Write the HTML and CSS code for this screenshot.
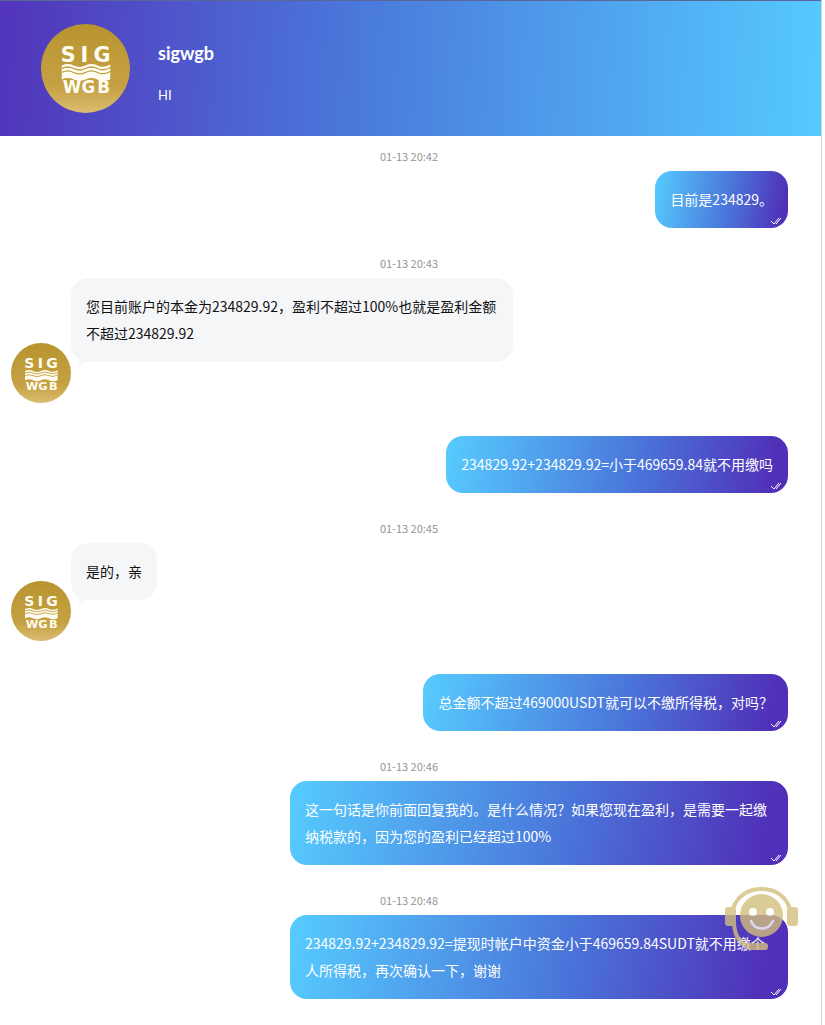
FILE: index.html
```html
<!DOCTYPE html>
<html lang="zh-CN">
<head>
    <meta charset="UTF-8">
    <meta name="viewport" content="width=device-width, initial-scale=1.0">
    <title>sigwgb</title>
    <link rel="stylesheet" href="styles.css">
</head>
<body>
    <!-- 公用图标 -->
    <svg class="defs" width="0" height="0" aria-hidden="true">
        <linearGradient id="gold" x1="0" y1="0" x2="0" y2="1">
            <stop offset="0" stop-color="#b8942f"/>
            <stop offset="0.7" stop-color="#c6a144"/>
            <stop offset="1" stop-color="#dabd70"/>
        </linearGradient>
        <symbol id="logo" viewBox="0 0 90 90" overflow="visible">
            <circle cx="45" cy="45" r="45" fill="url(#gold)"/>
            <g fill="#fffdf2" font-family="DejaVu Sans, sans-serif" font-weight="700">
                <text font-size="21" x="20 40 53" y="38">SIG</text>
                <text font-size="17" x="22 41 57" y="70">WGB</text>
            </g>
            <path fill="#fffdf2" d="M21 42q6-3 12 0t12 0t12 0t13-1v15q-7 3-13 0t-12 0t-12 0t-12 0z"/>
            <path fill="none" stroke="#bf9b3c" stroke-width="1.3" d="M21 45q6-3 12 0t12 0t12 0t13-1M21 49q6-3 12 0t12 0t12 0t13-1"/>
        </symbol>
        <symbol id="read" viewBox="0 0 12 10">
            <path fill="none" stroke="#fff" stroke-width="1" d="M1 5l3 3l5-6M6 8l5-6"/>
        </symbol>
    </svg>

    <main class="chat">
        <header class="header">
            <svg class="logo"><use href="#logo"/></svg>
            <div class="info">
                <h1 class="name">sigwgb</h1>
                <p class="sign">HI</p>
            </div>
        </header>

        <section class="list">
            <time class="time">01-13 20:42</time>
            <div class="msg sent">
                <p class="bubble">目前是234829。<svg class="read"><use href="#read"/></svg></p>
            </div>

            <time class="time">01-13 20:43</time>
            <div class="msg received">
                <svg class="avatar"><use href="#logo"/></svg>
                <p class="bubble">您目前账户的本金为234829.92，盈利不超过100%也就是盈利金额不超过234829.92</p>
            </div>
            <div class="msg sent">
                <p class="bubble">234829.92+234829.92=小于469659.84就不用缴吗<svg class="read"><use href="#read"/></svg></p>
            </div>

            <time class="time">01-13 20:45</time>
            <div class="msg received">
                <svg class="avatar"><use href="#logo"/></svg>
                <p class="bubble">是的，亲</p>
            </div>
            <div class="msg sent">
                <p class="bubble">总金额不超过469000USDT就可以不缴所得税，对吗？<svg class="read"><use href="#read"/></svg></p>
            </div>

            <time class="time">01-13 20:46</time>
            <div class="msg sent">
                <p class="bubble">这一句话是你前面回复我的。是什么情况？如果您现在盈利，是需要一起缴纳税款的，因为您的盈利已经超过100%<svg class="read"><use href="#read"/></svg></p>
            </div>

            <time class="time">01-13 20:48</time>
            <div class="msg sent">
                <p class="bubble">234829.92+234829.92=提现时帐户中资金小于469659.84SUDT就不用缴个人所得税，再次确认一下，谢谢<svg class="read"><use href="#read"/></svg></p>
            </div>
        </section>
    </main>

    <button class="service" type="button" aria-label="客服">
        <svg viewBox="0 0 74 64">
            <path fill="none" stroke="#d3bf7c" stroke-width="4" d="M8 22C12 9 23 2 36.500 2S61 9 65 22"/>
            <rect x="0" y="20" width="11" height="19" rx="3" fill="#d3bf7c"/>
            <rect x="62" y="20" width="11" height="19" rx="3" fill="#d3bf7c"/>
            <path fill="none" stroke="#d3bf7c" stroke-width="4" d="M9 37C10 50 16 58 26 60"/>
            <rect x="23" y="56" width="20" height="7" rx="3" fill="#d3bf7c"/>
            <circle cx="36.500" cy="28.500" r="21.500" fill="#d3bf7c"/>
            <circle cx="28" cy="25" r="4" fill="#fff"/>
            <circle cx="45" cy="25" r="4" fill="#fff"/>
            <path fill="none" stroke="#fff" stroke-width="2.500" stroke-linecap="round" d="M26 34C30 44 43 44 48 34"/>
        </svg>
    </button>
</body>
</html>
```
FILE: styles.css
```css
*{
    box-sizing: border-box;
}
body,
h1,
p{
    margin: 0;
}
body{
    background-color: #fdfdfd;
    font-family: "Noto Sans CJK SC", sans-serif;
    font-size: 14px;
    color: #111;
}
.defs{
    position: absolute;
    overflow: visible;
}
.chat{
    min-height: 100vh;
    margin-right: 3px;
    border-right: 1px solid #d5d5d5;
    background-color: #fff;
}
.header{
    display: flex;
    align-items: center;
    gap: 28px;
    height: 136px;
    padding-left: 41px;
    border-top: 1px solid #5a6598;
    background: linear-gradient(93deg, #5234ba, #4a7bdc 45%, #55caff);
    color: #fff;
}
.logo{
    width: 89px;
    height: 89px;
    overflow: visible;
}
.info{
    padding-top: 9px;
    font-family: Lato, sans-serif;
}
.name{
    margin-bottom: 20px;
    font-size: 18px;
    line-height: 24px;
}
.sign{
    font-size: 13px;
    line-height: 20px;
}
.list{
    padding: 10px 0 27px;
}
.time{
    display: block;
    margin-bottom: 5px;
    padding-right: 3px;
    font-size: 11px;
    line-height: 20px;
    color: #949494;
    text-align: center;
}
.msg{
    display: flex;
}
.msg + .time{
    margin-top: 25px;
}
.bubble{
    position: relative;
    padding: 15px;
    border-radius: 17px;
    line-height: 27px;
}
.sent{
    justify-content: flex-end;
    padding: 0 33px 0 290px;
}
.sent .bubble{
    background: linear-gradient(100deg, #56ccff, #4a76da 55%, #5030b8 95%);
    color: #fff;
}
.received{
    align-items: flex-end;
    margin-bottom: 33px;
    padding: 0 300px 0 11px;
}
.received .bubble{
    max-width: 442px;
    margin-bottom: 41px;
    background-color: #f5f6f8;
}
/* 气泡小尾巴 */
.received .bubble::after{
    content: "";
    position: absolute;
    left: 8px;
    bottom: -4px;
    border-top: 6px solid #f5f6f8;
    border-right: 8px solid transparent;
}
.avatar{
    flex: none;
    width: 60px;
    height: 60px;
    overflow: visible;
}
.read{
    position: absolute;
    right: 6px;
    bottom: 2px;
    width: 12px;
    height: 10px;
}
.service{
    position: fixed;
    right: 26px;
    bottom: 74px;
    width: 74px;
    height: 64px;
    padding: 0;
    border: 0;
    background: none;
    opacity: .8;
    cursor: pointer;
}
.service svg{
    display: block;
}
```
